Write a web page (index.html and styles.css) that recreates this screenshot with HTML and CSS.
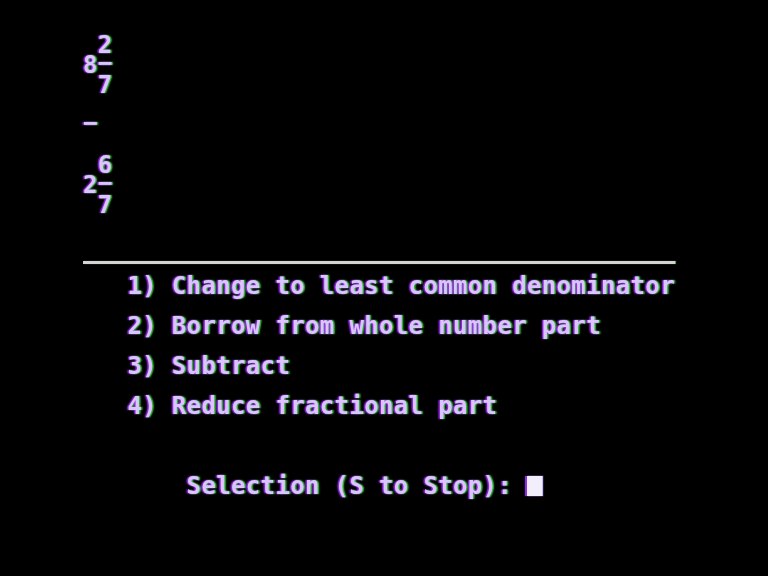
FILE: index.html
```html
<!DOCTYPE html>
<html lang="en">
<head>
<meta charset="utf-8">
<title>Fractions</title>
<link rel="stylesheet" href="styles.css">
</head>
<body>
<main class="screen">
  <section class="problem">
    <div class="row"> 2</div>
    <div class="row">8<span class="bar">−</span></div>
    <div class="row"> 7</div>
    <div class="row"></div>
    <div class="row"><span class="bar">−</span></div>
    <div class="row"></div>
    <div class="row"> 6</div>
    <div class="row">2<span class="bar">−</span></div>
    <div class="row"> 7</div>
    <div class="row"></div>
    <div class="row"></div>
    <div class="row"><div class="rule"></div></div>
  </section>
  <section class="menu">
    <div class="row">   1) Change to least common denominator</div>
    <div class="row"></div>
    <div class="row">   2) Borrow from whole number part</div>
    <div class="row"></div>
    <div class="row">   3) Subtract</div>
    <div class="row"></div>
    <div class="row">   4) Reduce fractional part</div>
    <div class="row"></div>
    <div class="row"></div>
    <div class="row"></div>
    <div class="row">       Selection (S to Stop): <span class="cursor"></span></div>
  </section>
</main>
</body>
</html>
```
FILE: styles.css
```css
html, body {
  margin: 0;
  padding: 0;
  background: #000;
  width: 768px;
  height: 576px;
  overflow: hidden;
}

.screen {
  padding: 34.5px 0 0 83px;
  font-family: "DejaVu Sans Mono", "Liberation Mono", monospace;
  font-weight: bold;
  font-size: 24px;
  letter-spacing: 0.35px;
  line-height: 20px;
  color: #dcc4ff;
  text-shadow: -1.5px 0 1.5px #9c2ff2, 1.5px 0 1.5px #38c838, 0 0 1px #b070ff;
  filter: blur(0.5px);
}

.menu {
  margin-top: -5px;
}

.row {
  height: 20px;
  white-space: pre;
}

.bar {
  position: relative;
  top: -2px;
}

.rule {
  margin-top: 6px;
  width: 592px;
  height: 3px;
  background: #d4d4d4;
  box-shadow: 1px 0 1px #6ac04a;
}

.cursor {
  display: inline-block;
  width: 15px;
  height: 20px;
  vertical-align: top;
  background: #f2eefc;
  box-shadow: -2px 0 1px #8a2ee0, 1px 0 1px #c0b8ff;
}
```
